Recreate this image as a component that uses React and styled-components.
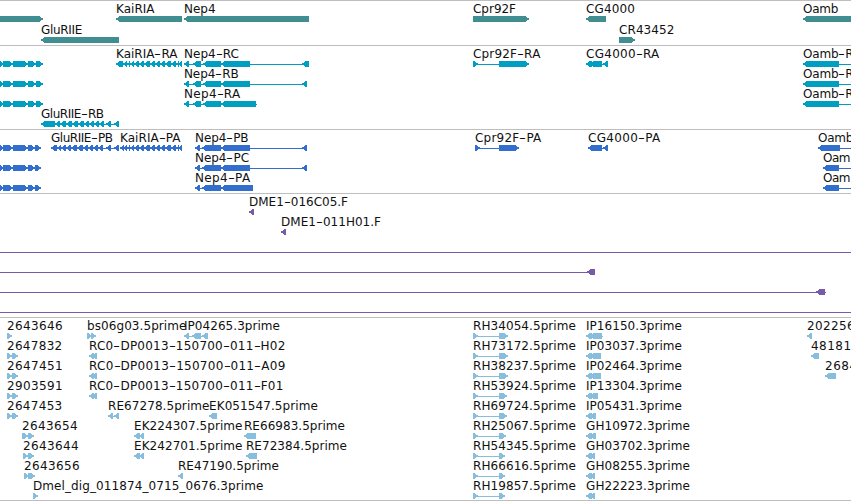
import React from 'react';
import styled, { createGlobalStyle } from 'styled-components';

const FONT = '12px "DejaVu Sans", Verdana, sans-serif';
const GENE = '#408e92';
const MRNA = '#009fc1';
const CDS = '#316ecd';
const BAC = '#785aa8';
const EST = '#88bedd';

// feature: [label, start, end of label, direction, blocks, line]
const L = 'left';
const R = 'right';

const upstream = [[-4, 4], [3, 13], [13, 28], [28, 36], [36, 43]];
const upstreamCds = [[-4, 4], [3, 13], [13, 28], [28, 35], [35, 41]];
const kaiExons = [[123, 127], [127, 130], [130, 134], [134, 139], [139, 144], [144, 150], [150, 155], [155, 160], [160, 165], [165, 171], [171, 176], [176, 179], [178, 182]];

const est5 = (name, end) => [name, 473, 575.5, R, [[473, 478], [499, end]]];
const est3 = (name, labelEnd, end) => [name, 586, labelEnd, L, [[586, 592], [590, end]]];

const tracks = [
    {
        color: GENE,
        pitch: 21,
        bottom: 2,
        rows: [
            [
                ['', 0, 0, R, [[-10, 43]]],
                ['KaiRIA', 116, 154, L, [[116, 182]]],
                ['Nep4', 184, 215, L, [[184, 309]]],
                ['Cpr92F', 473, 515.5, R, [[473, 529]]],
                ['CG4000', 586, 634.5, L, [[586, 606]]],
                ['Oamb', 803, 837.5, L, [[803, 870]]],
            ],
            [
                ['GluRIIE', 41, 81.5, L, [[41, 119]]],
                ['CR43452', 619, 674, R, [[619, 635]]],
            ],
        ],
    },
    {
        color: MRNA,
        pitch: 20,
        bottom: 3,
        rows: [
            [
                ['', 0, 0, R, upstream],
                ['KaiRIA-RA', 116, 177, L, [[116, 123], ...kaiExons]],
                ['Nep4-RC', 184, 238.5, L, [[184, 189], [193, 201], [203, 221], [221, 250], [302, 309]]],
                ['Cpr92F-RA', 473, 540, R, [[473, 478], [499, 529]]],
                ['CG4000-RA', 586, 659, L, [[586, 592], [590, 602], [603, 608]]],
                ['Oamb-R', 803, 853, L, [[803, 839]], [839, 851]],
            ],
            [
                ['', 0, 0, R, upstream],
                ['Nep4-RB', 184, 238, L, [[184, 189], [193, 201], [203, 221], [221, 250], [302, 307]]],
                ['Oamb-R', 803, 853, L, [[803, 839]], [839, 851]],
            ],
            [
                ['', 0, 0, R, upstream],
                ['Nep4-RA', 184, 240, L, [[184, 189], [193, 201], [203, 221], [221, 256]], [184, 257]],
                ['Oamb-R', 803, 853, L, [[803, 839]], [839, 851]],
            ],
            [
                ['GluRIIE-RB', 41, 103, L, [[41, 55], [55, 60], [60, 66], [66, 72], [72, 78], [78, 84], [84, 89], [89, 94], [94, 99], [99, 104], [106, 111], [114, 119]]],
            ],
        ],
    },
    {
        color: CDS,
        pitch: 20,
        bottom: 3,
        rows: [
            [
                ['', 0, 0, R, upstreamCds],
                ['GluRIIE-PB', 51, 112, L, [[51, 57], [57, 61], [61, 66], [66, 71], [71, 77], [77, 83], [83, 88], [88, 93], [93, 98], [98, 103], [106, 111], [114, 119]]],
                ['KaiRIA-PA', 120, 180, L, [[120, 124], ...kaiExons]],
                ['Nep4-PB', 195, 248, L, [[195, 200], [202, 221], [221, 250], [302, 307]]],
                ['Cpr92F-PA', 475, 541, R, [[475, 480], [499, 519]]],
                ['CG4000-PA', 588, 660, L, [[588, 602], [603, 608]]],
                ['Oamb', 818, 852.5, L, [[818, 840]], [840, 851]],
            ],
            [
                ['', 0, 0, R, upstreamCds],
                ['Nep4-PC', 195, 248.5, L, [[195, 200], [202, 221], [221, 250], [302, 307]]],
                ['Oam', 823, 849.5, L, [[823, 839]], [839, 851]],
            ],
            [
                ['', 0, 0, R, upstreamCds],
                ['Nep4-PA', 195, 250, L, [[195, 200], [202, 221], [221, 253]]],
                ['Oam', 823, 849.5, L, [[823, 839]], [839, 851]],
            ],
        ],
    },
    {
        color: BAC,
        pitch: 20,
        bottom: 3,
        rows: [
            [['DME1-016C05.F', 249, 347.5, L, [[249, 254]]]],
            [['DME1-011H01.F', 281, 380.5, L, [[281, 286]]]],
            [['', 0, 0, L, [], [0, 851]]],
            [['', 0, 0, L, [[587, 595]], [0, 590]]],
            [['', 0, 0, L, [[816, 825]], [0, 826]]],
            [['', 0, 0, L, [], [0, 851]]],
        ],
    },
    {
        color: EST,
        pitch: 20,
        bottom: 2,
        rows: [
            [
                ['2643646', 7, 62.5, R, [[7, 12]]],
                ['bs06g03.5prime', 87, 186, R, [[87, 92], [91, 96]]],
                ['IP04265.3prime', 184, 279.5, L, [[184, 189], [192, 201], [202, 208]]],
                est5('RH34054.5prime', 508),
                ['IP16150.3prime', 586, 681.5, L, [[586, 592], [590, 602]], [586, 603]],
                ['202256', 807, 854.5, L, [[807, 812]]],
            ],
            [
                ['2647832', 7, 62, R, [[7, 12], [12, 18]]],
                ['RC0-DP0013-150700-011-H02', 89, 285, L, [[89, 94], [92, 97]]],
                est5('RH73172.5prime', 508),
                est3('IP03037.3prime', 681.5, 601),
                ['48181', 811, 851, L, [[811, 819]]],
            ],
            [
                ['2647451', 7, 62.5, R, [[7, 12], [12, 18]]],
                ['RC0-DP0013-150700-011-A09', 89, 285, L, [[89, 94], [92, 97]]],
                est5('RH38237.5prime', 508),
                est3('IP02464.3prime', 681.5, 601),
                ['2684', 825, 857, L, [[825, 836]]],
            ],
            [
                ['2903591', 7, 62.5, R, [[7, 12], [12, 18]]],
                ['RC0-DP0013-150700-011-F01', 89, 283, L, [[89, 94], [92, 97]]],
                est5('RH53924.5prime', 507),
                est3('IP13304.3prime', 681.5, 598),
            ],
            [
                ['2647453', 7, 62, R, [[7, 12], [12, 18]]],
                ['RE67278.5prime', 108, 209, L, [[108, 113], [114, 119]]],
                ['EK051547.5prime', 209, 317.5, L, [[209, 217]]],
                est5('RH69724.5prime', 507),
                est3('IP05431.3prime', 681.5, 596),
            ],
            [
                ['2643654', 22, 77.5, R, [[22, 28], [28, 34]]],
                ['EK224307.5prime', 134, 242, L, [[134, 140], [139, 144]]],
                ['RE66983.5prime', 244, 344.5, L, [[244, 256]]],
                est5('RH25067.5prime', 506),
                est3('GH10972.3prime', 689.5, 596),
            ],
            [
                ['2643644', 23, 78.5, R, [[23, 28], [28, 34]]],
                ['EK242701.5prime', 134, 242, L, [[134, 140], [139, 144]]],
                ['RE72384.5prime', 246, 346.5, L, [[246, 257]]],
                est5('RH54345.5prime', 505),
                est3('GH03702.3prime', 689.5, 595),
            ],
            [
                ['2643656', 24, 79.5, R, [[24, 29], [28, 35]]],
                ['RE47190.5prime', 178, 278.5, L, [[178, 183]]],
                est5('RH66616.5prime', 505),
                est3('GH08255.3prime', 689.5, 595),
            ],
            [
                ['Dmel_dig_011874_0715_0676.3prime', 33, 263, R, [[33, 38]]],
                est5('RH19857.5prime', 505),
                est3('GH22223.3prime', 689.5, 595),
            ],
        ],
    },
];

const ctx = document.createElement('canvas').getContext('2d');
const HYPHEN_WIDTH = 7;

// spread the letters so that the label fills its span, hyphens have a fixed width
const getSpacing = (text, width) => {
    ctx.font = FONT;
    const letters = text.replaceAll('-', '');
    const hyphens = text.length - letters.length;
    return (width + 0.5 - hyphens * HYPHEN_WIDTH - ctx.measureText(letters).width) / letters.length;
};

const arrow = (start, end, dir) => {
    const head = Math.min(5, end - start);
    return dir === L
        ? `${start},2.5 ${start + 2},1.5 ${start + head - 1},0 ${end},0 ${end},6 ${start + head - 1},6 ${start + 2},4.5 ${start},3.6`
        : `${start},0 ${end - head + 1},0 ${end - 2},1.5 ${end},2.5 ${end},3.6 ${end - 2},4.5 ${end - head + 1},6 ${start},6`;
};

const Glyph = ({ blocks, dir, line, color }) => {
    const span = line || (blocks.length > 1 ? [blocks[0][0], blocks[blocks.length - 1][1]] : null);
    return (
        <g fill={color}>
            {span && <rect x={span[0]} y="3" width={span[1] - span[0]} height="1" />}
            {blocks.map(([start, end]) => (
                <polygon key={start} points={arrow(start, end, dir)} />
            ))}
        </g>
    );
};

const App = () => {
    return (
        <Browser>
            <GlobalStyle />
            {tracks.map((track, i) => (
                <Track key={i} $bottom={track.bottom}>
                    {track.rows.map((row, j) => (
                        <Row key={j} $height={track.pitch}>
                            <Labels>
                                {row.filter(item => item[0]).map(([label, start, end]) => (
                                    <Label
                                        key={label}
                                        style={{ left: start, letterSpacing: getSpacing(label, end - start) }}
                                    >
                                        {label.split('-').map((part, k) => (
                                            <React.Fragment key={k}>
                                                {k > 0 && <Hyphen>-</Hyphen>}
                                                {part}
                                            </React.Fragment>
                                        ))}
                                    </Label>
                                ))}
                            </Labels>
                            <Glyphs viewBox="0 0 851 6">
                                {row.map(([, , , dir, blocks, line], k) => (
                                    <Glyph key={k} dir={dir} blocks={blocks} line={line} color={track.color} />
                                ))}
                            </Glyphs>
                        </Row>
                    ))}
                </Track>
            ))}
        </Browser>
    );
};

export default App;

const GlobalStyle = createGlobalStyle`
    body {
        margin: 0;
        background: #fff;
        overflow: hidden;
    }
`;

const Browser = styled.div`
    width: 851px;
    height: 501px;
    box-sizing: border-box;
    border-bottom: 1px solid #bebebe;
    background: #fff;
    overflow: hidden;
`;

const Track = styled.div`
    border-top: 1px solid #bebebe;
    padding-bottom: ${props => props.$bottom}px;
`;

const Row = styled.div`
    display: flex;
    flex-direction: column;
    height: ${props => props.$height}px;
`;

const Labels = styled.div`
    position: relative;
    flex: 0 0 15px;
`;

/* labels sit at their place on the sequence */
const Label = styled.span`
    position: absolute;
    top: 1px;
    font: ${FONT};
    line-height: 15px;
    color: #111;
    white-space: pre;
`;

const Hyphen = styled.span`
    display: inline-block;
    width: ${HYPHEN_WIDTH}px;
    letter-spacing: 0;
    text-align: center;
    transform: scaleX(1.6);
`;

const Glyphs = styled.svg`
    display: block;
    flex: none;
    width: 851px;
    height: 6px;
    shape-rendering: crispEdges;
`;
